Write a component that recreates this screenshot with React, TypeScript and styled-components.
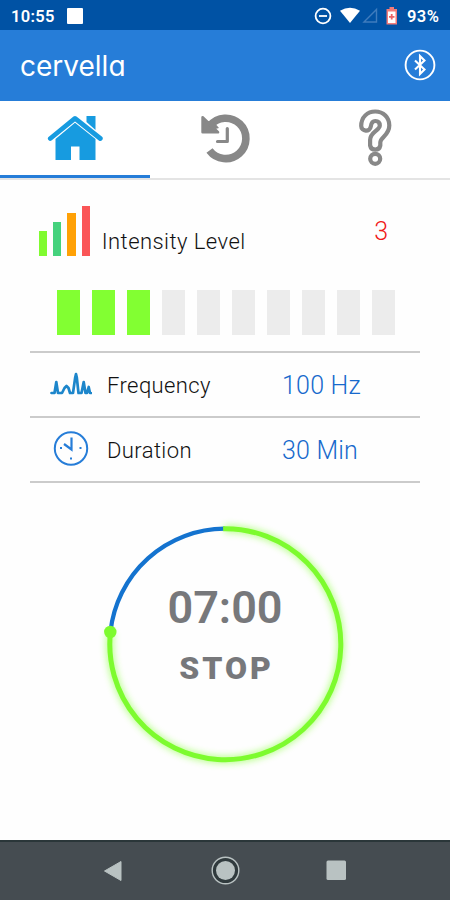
import React from 'react';
import styled, { createGlobalStyle } from 'styled-components';

const GlobalStyle = createGlobalStyle`
  * { box-sizing: border-box; }
  body { margin: 0; background: #fff; font-family: Roboto, "Liberation Sans", sans-serif; }
  svg { display: block; flex: none; }
`;

const Screen = styled.div`
  width: 450px;
  height: 900px;
  display: flex;
  flex-direction: column;
  background: #fefefe;
  overflow: hidden;
`;

const StatusBar = styled.header`
  height: 30px;
  flex: none;
  display: flex;
  align-items: center;
  padding: 2px 9px 0 11px;
  background: #0052a4;
  color: #fff;
  font-size: 16.5px;
  font-weight: 600;
`;

const Clock = styled.span`
  width: 56px;
  letter-spacing: 0.3px;
`;

const Notification = styled.span`
  width: 16px;
  height: 16px;
  background: #fff;
  border-radius: 1px;
`;

const StatusIcons = styled.div`
  margin-left: auto;
  display: flex;
  align-items: center;
`;

const StatusGlyphs = styled.div`
  display: flex;
  align-items: center;
  gap: 8px;
`;

const Battery = styled.span`
  margin-left: 8px;
  width: 34px;
  white-space: nowrap;
  letter-spacing: 0.4px;
`;

const AppBar = styled.div`
  height: 70.5px;
  flex: none;
  display: flex;
  align-items: center;
  justify-content: space-between;
  padding: 0 14px 0 20px;
  background: #267dd8;
`;

const Brand = styled.h1`
  margin: 0;
  padding-top: 1px;
  color: #fff;
  font-family: Inter, sans-serif;
  font-feature-settings: "cv11";
  font-size: 28px;
  font-weight: 400;
  line-height: 34px;
`;

const Tabs = styled.nav`
  height: 79.5px;
  flex: none;
  display: grid;
  grid-template-columns: repeat(3, 1fr);
  border-bottom: 2px solid #e4e4e4;
  background: #fff;
`;

const Tab = styled.div<{ $active?: boolean }>`
  height: 77.5px;
  display: flex;
  justify-content: center;
  border-bottom: ${(p) => (p.$active ? '3px solid #267dd8' : 'none')};
`;

const Content = styled.main`
  flex: 1;
  display: flex;
  flex-direction: column;
  padding: 0 30px;
`;

const IntensityHeader = styled.div`
  height: 109px;
  display: flex;
  padding: 26px 32px 0 9px;
`;

const LevelIcon = styled.div`
  display: flex;
  align-items: flex-end;
  gap: 6px;
  height: 50px;
`;

const LevelBar = styled.span<{ $height: number; $color: string }>`
  width: 8.2px;
  height: ${(p) => p.$height}px;
  background: ${(p) => p.$color};
`;

const IntensityLabel = styled.span`
  margin: 22px 0 0 12px;
  font-size: 22px;
  line-height: 28px;
  font-weight: 300;
  letter-spacing: 0.45px;
  color: #111;
`;

const IntensityValue = styled.span`
  margin: 11px 0 0 auto;
  font-size: 25px;
  line-height: 30px;
  font-weight: 300;
  color: #f01818;
`;

const Meter = styled.div`
  height: 61.5px;
  display: flex;
  gap: 12.1px;
  padding: 1px 0 0 26.5px;
`;

const Segment = styled.span<{ $on: boolean }>`
  width: 23px;
  height: 44.5px;
  background: ${(p) => (p.$on ? '#82ff32' : '#ececec')};
`;

const Setting = styled.div`
  height: 65px;
  display: grid;
  grid-template-columns: 77px 1fr 138px;
  align-items: center;
  border-top: 2px solid #cbcbcb;
  &:last-child { height: 67px; border-bottom: 2px solid #cbcbcb; }
`;

const SettingIcon = styled.div`
  width: 77px;
  display: flex;
  justify-content: center;
  padding-left: 5px;
`;

const SettingName = styled.span`
  padding-top: 2px;
  font-size: 22px;
  font-weight: 300;
  letter-spacing: 0.4px;
  color: #111;
`;

const SettingValue = styled.span`
  padding-top: 2px;
  font-size: 25px;
  font-weight: 300;
  letter-spacing: 0.2px;
  color: #1769cc;
`;

const Settings = styled.section`
  display: flex;
  flex-direction: column;
`;

const Timer = styled.section`
  display: grid;
  justify-content: center;
  margin-top: 31.5px;
  > * { grid-area: 1 / 1; }
`;

const TimerText = styled.div`
  display: flex;
  flex-direction: column;
  align-items: center;
  padding-top: 68px;
  color: #77787b;
`;

const Remaining = styled.span`
  font-size: 45px;
  line-height: 52px;
  font-weight: 600;
`;

const StopButton = styled.button`
  margin-top: 14px;
  padding: 0 0 0 3px;
  border: 0;
  background: none;
  color: inherit;
  font-family: inherit;
  font-size: 32px;
  line-height: 40px;
  font-weight: 900;
  letter-spacing: 3px;
`;

const NavBar = styled.footer`
  height: 60px;
  flex: none;
  display: flex;
  align-items: center;
  justify-content: space-between;
  padding: 0 102px 0 103px;
  background: #454c51;
  border-top: 2px solid #2a3639;
`;

const LEVELS = [
  { height: 25, color: '#80fb30' },
  { height: 34, color: '#45d27d' },
  { height: 43, color: '#ffa106' },
  { height: 50, color: '#fa5557' },
];

const DoNotDisturbIcon = () => (
  <svg width="18" height="18" viewBox="0 0 18 18" fill="none" stroke="#fff" strokeWidth="1.8">
    <circle cx="9" cy="9" r="7.4" />
    <path d="M5 9h8" />
  </svg>
);

const SignalIcons = () => (
  <svg width="59" height="20" viewBox="0 0 59 20">
    <path d="M0 4.7Q10 -1.3 20 4.7L10 17Z" fill="#fff" />
    <path d="M24 16L36.5 3.5V16Z" fill="none" stroke="#3f7cbd" strokeWidth="1.4" />
    <path d="M49.5 1h4.5v2h3v15.5H46.5V3h3Z" fill="#f27b79" />
    <path d="M48 5.5h7.5v11.5h-7.5Z" fill="#fff" />
    <path d="M51.7 8v5.5M49 10.8h5.500" stroke="#ec6264" strokeWidth="1.8" />
  </svg>
);

const BluetoothIcon = () => (
  <svg width="32" height="32" viewBox="0 0 32 32" fill="none" stroke="#fff">
    <circle cx="16" cy="16" r="14.4" strokeWidth="1.9" />
    <path d="M11 11.5L20.5 20.5L16 25V7L20.5 11.5L11 20.5" strokeWidth="2.1" />
  </svg>
);

const HomeIcon = () => (
  <svg width="56" height="77" viewBox="47 101 56 77">
    <path d="M55.5 160V139L75 122.8L95.5 139V160H79.5V146.5H71V160Z" fill="#179be0" />
    <path d="M86.5 116H95.5V130L86.5 122Z" fill="#179be0" />
    <path d="M50.3 138.5L75 118.4L100.3 138.5" fill="none" stroke="#179be0" strokeWidth="4.8" strokeLinecap="round" strokeLinejoin="round" />
  </svg>
);

const HistoryIcon = () => (
  <svg width="56" height="77" viewBox="197 101 56 77">
    <path d="M210 125.7A20.2 20.2 0 1 1 209.5 150.5" fill="none" stroke="#888" strokeWidth="7.6" />
    <path d="M202.6 117.3L218 132.3H202.6Z" fill="#888" stroke="#888" strokeWidth="2.6" strokeLinejoin="round" />
    <path d="M207 121L213 121L219 128L212 130Z" fill="#888" />
    <path d="M227.3 128.500V141.500H217.500" fill="none" stroke="#888" strokeWidth="3.2" strokeLinecap="round" strokeLinejoin="round" />
  </svg>
);

const HelpIcon = () => (
  <svg width="56" height="77" viewBox="347 101 56 77" fill="none" stroke="#888" strokeWidth="4.2">
    <path d="M361.2 126C361.2 117 367.5 111.5 375.2 111.5C383.5 111.5 389.3 117.5 389.3 125.5C389.3 135.5 380.3 137 380.3 142.5V145.5A5.2 5.2 0 0 1 370.1 145.5V140C370.1 132 379.8 130.5 379.8 125.5C379.8 122.5 378 121 375.3 121C372.5 121 371.3 123 370.8 126.5C370 132.5 361.2 131.5 361.2 126Z" />
    <circle cx="375.2" cy="158.8" r="5" />
  </svg>
);

const FrequencyIcon = () => (
  <svg width="42" height="24" viewBox="50 372.5 42 24" fill="none" stroke="#1d86cb" strokeWidth="2.7" strokeLinecap="round" strokeLinejoin="round">
    <path d="M51.5 393.5H54.5L56.3 382.5L58 393.5H62L64.500 388.500L66.500 386.500L68.500 388.500L70 393.500H73L75.200 378L76 374.500L76.800 378L78.500 393.500H81.500L83.700 382.500L85.500 393.500H87L88.700 387.500L90 393.500H91" />
  </svg>
);

const DurationIcon = () => (
  <svg width="36" height="36" viewBox="0 0.5 36 36" fill="none" stroke="#267dd8">
    <circle cx="18" cy="18" r="16.2" strokeWidth="2" />
    <path d="M18.500 7V19L11 13.500" strokeWidth="2.2" />
    <path d="M7 17.5h2M26.5 17.5h2M18 27v2" strokeWidth="2" />
  </svg>
);

const TimerRing = () => (
  <svg width="260" height="260" viewBox="95.4 514.5 260 260" fill="none">
    <defs>
      <filter id="glow" x="-10%" y="-10%" width="120%" height="120%">
        <feGaussianBlur stdDeviation="3.5" />
      </filter>
    </defs>
    <path d="M225 529.2A115.5 115.5 0 1 1 110.9 632" stroke="#82ff32" strokeWidth="7" opacity="0.6" filter="url(#glow)" />
    <path d="M110.9 632A115.5 115.5 0 0 1 225 529.2" stroke="#1473cf" strokeWidth="4.2" />
    <path d="M223.5 529.2A115.5 115.5 0 1 1 110.9 632" stroke="#7dfb2e" strokeWidth="5" />
    <circle cx="110.7" cy="632.5" r="6.2" fill="#7dfb2e" />
  </svg>
);

const BackIcon = () => (
  <svg width="20" height="24" viewBox="0 0 20 24">
    <path d="M1.5 12L18 2.5V21.5Z" fill="#b9c2c2" stroke="#b9c2c2" strokeLinejoin="round" />
  </svg>
);

const HomeNavIcon = () => (
  <svg width="30" height="30" viewBox="0 0.5 30 30">
    <circle cx="15.5" cy="15" r="13.3" fill="#303a3d" stroke="#b9c2c2" strokeWidth="1.4" />
    <circle cx="15.5" cy="15" r="9.5" fill="#b9c2c2" />
  </svg>
);

const RecentIcon = () => (
  <svg width="22" height="22" viewBox="0 0.5 22 22">
    <rect x="0.5" y="1" width="19.5" height="19.5" rx="1.5" fill="#b9c2c2" />
  </svg>
);

export default function App() {
  const level = 3;
  return (
    <Screen>
      <GlobalStyle />
      <StatusBar>
        <Clock>10:55</Clock>
        <Notification />
        <StatusIcons>
          <StatusGlyphs>
            <DoNotDisturbIcon />
            <SignalIcons />
          </StatusGlyphs>
          <Battery>93%</Battery>
        </StatusIcons>
      </StatusBar>
      <AppBar>
        <Brand>cervella</Brand>
        <BluetoothIcon />
      </AppBar>
      <Tabs>
        <Tab $active><HomeIcon /></Tab>
        <Tab><HistoryIcon /></Tab>
        <Tab><HelpIcon /></Tab>
      </Tabs>
      <Content>
        <IntensityHeader>
          <LevelIcon>
            {LEVELS.map((bar) => (
              <LevelBar key={bar.color} $height={bar.height} $color={bar.color} />
            ))}
          </LevelIcon>
          <IntensityLabel>Intensity Level</IntensityLabel>
          <IntensityValue>{level}</IntensityValue>
        </IntensityHeader>
        <Meter>
          {Array.from({ length: 10 }, (_, i) => (
            <Segment key={i} $on={i < level} />
          ))}
        </Meter>
        <Settings>
          <Setting>
            <SettingIcon><FrequencyIcon /></SettingIcon>
            <SettingName>Frequency</SettingName>
            <SettingValue>100 Hz</SettingValue>
          </Setting>
          <Setting>
            <SettingIcon><DurationIcon /></SettingIcon>
            <SettingName>Duration</SettingName>
            <SettingValue>30 Min</SettingValue>
          </Setting>
        </Settings>
        <Timer>
          <TimerRing />
          <TimerText>
            <Remaining>07:00</Remaining>
            <StopButton>STOP</StopButton>
          </TimerText>
        </Timer>
      </Content>
      <NavBar>
        <BackIcon />
        <HomeNavIcon />
        <RecentIcon />
      </NavBar>
    </Screen>
  );
}
